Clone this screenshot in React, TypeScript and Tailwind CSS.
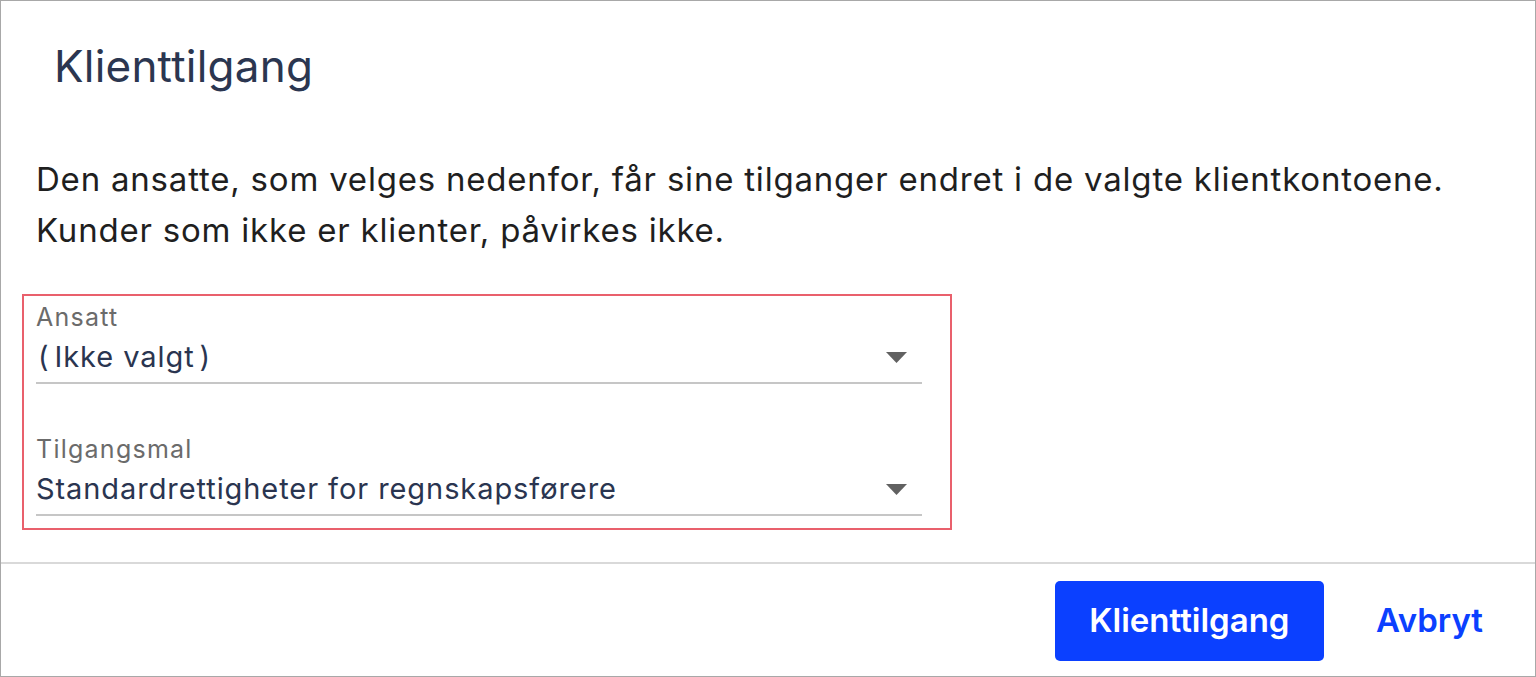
const FONT = "font-['Inter','Liberation_Sans',sans-serif]";

function Caret() {
  return (
    <svg width="21" height="11" viewBox="0 0 21 11" className="shrink-0">
      <path d="M0 0 H21 L10.5 11 Z" fill="#616161" />
    </svg>
  );
}

function SelectField({ label, children }: { label: string; children: React.ReactNode }) {
  return (
    <div className="flex flex-col">
      <span className="text-[25px] leading-[28px] tracking-[0.05em] text-[#6b6b6b]">{label}</span>
      <div className="mt-[10px] flex items-center justify-between border-b-2 border-[#c6c6c6] pb-[9px] pr-[15px]">
        <span className="text-[29px] leading-[32px] tracking-[0.032em] text-[#2a3550]">{children}</span>
        <Caret />
      </div>
    </div>
  );
}

export default function App() {
  return (
    <div className={`${FONT} flex h-[677px] w-[1536px] flex-col border border-[#a8a8a8] bg-white`}>
      <div className="pl-[53px] pt-[43px]">
        <h1 className="text-[44px] leading-[44px] font-normal tracking-[0.005em] text-[#2b3650]">Klienttilgang</h1>
      </div>

      <div className="flex flex-1 flex-col pl-[21px]">
        <p className="ml-[14px] mt-[66px] text-[33px] leading-[51px] tracking-[0.024em] text-[#1f1f1f]">
          Den ansatte, som velges nedenfor, får sine tilganger endret i de valgte klientkontoene.
          <br />
          Kunder som ikke er klienter, påvirkes ikke.
        </p>

        <div className="mt-[38px] flex w-[930px] flex-col gap-[51px] border-2 border-[#e9606c] pb-[12px] pl-[12px] pr-[28px] pt-[7px]">
          <SelectField label="Ansatt">
            <span className="ml-[2px] mr-[5px]">(</span>Ikke valgt<span className="ml-[5px]">)</span>
          </SelectField>
          <SelectField label="Tilgangsmal">Standardrettigheter for regnskapsførere</SelectField>
        </div>
      </div>

      <div className="flex items-center justify-end gap-[26px] border-t-2 border-[#d9d9d9] pb-[15px] pr-[26px] pt-[17px]">
        <button
          type="button"
          className="h-[80px] w-[269px] rounded-[5px] bg-[#0b40ff] text-[33px] font-semibold text-white"
        >
          Klienttilgang
        </button>
        <button type="button" className="px-[26px] text-[33px] font-semibold text-[#0b40ff]">
          Avbryt
        </button>
      </div>
    </div>
  );
}
